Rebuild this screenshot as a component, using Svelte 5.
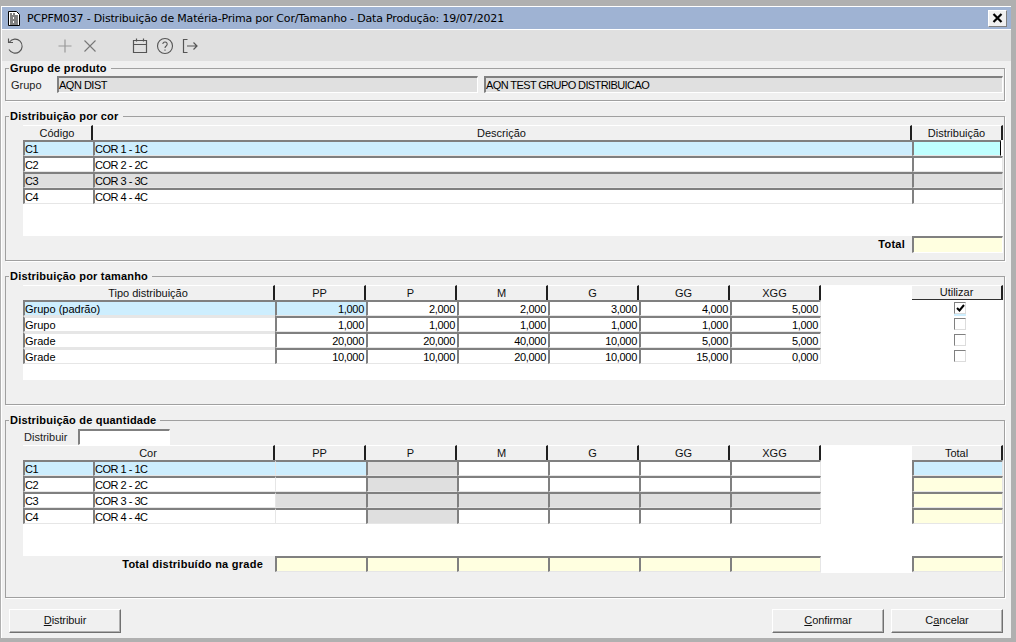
<script>
  const sizes = ['PP', 'P', 'M', 'G', 'GG', 'XGG'];
  const colors = [
    { code: 'C1', name: 'COR 1 - 1C' },
    { code: 'C2', name: 'COR 2 - 2C' },
    { code: 'C3', name: 'COR 3 - 3C' },
    { code: 'C4', name: 'COR 4 - 4C' }
  ];
  const types = [
    { name: 'Grupo (padrão)', values: ['1,000', '2,000', '2,000', '3,000', '4,000', '5,000'], on: true },
    { name: 'Grupo', values: ['1,000', '1,000', '1,000', '1,000', '1,000', '1,000'], on: false },
    { name: 'Grade', values: ['20,000', '20,000', '40,000', '10,000', '5,000', '5,000'], on: false },
    { name: 'Grade', values: ['10,000', '10,000', '20,000', '10,000', '15,000', '0,000'], on: false }
  ];
</script>

<div class="window">
  <div class="titlebar">
    <svg class="doc" width="14" height="15" viewBox="0 0 14 15">
      <path d="M1.500 .5h8l3 3v11h-11z" fill="#fff" stroke="#000" />
      <path d="M3 3h2M6 3h2M3 5h8M3 7h3M7 7h4M3 9h8M3 11h3M7 11h4M3 13h8" stroke="#000" />
    </svg>
    <span class="title">PCPFM037 - Distribuição de Matéria-Prima por Cor/Tamanho - Data Produção: 19/07/2021</span>
    <button class="close" aria-label="Fechar">
      <svg width="11" height="10" viewBox="0 0 11 10"><path d="M1.500 1 9.500 9M9.500 1 1.500 9" stroke="#000" stroke-width="2.2" /></svg>
    </button>
  </div>

  <div class="toolbar">
    <svg class="tool" width="20" height="20" viewBox="0 0 20 20" fill="none" stroke="#555" stroke-width="1.1">
      <path d="M4.500 6A7 7 0 1 1 4 13.500" /><path d="M3.500 2.500v4h4.500" />
    </svg>
    <svg class="tool add" width="20" height="20" viewBox="0 0 20 20" fill="none" stroke="#999" stroke-width="1.2">
      <path d="M10 3.500v13M3.500 10h13" />
    </svg>
    <svg class="tool" width="20" height="20" viewBox="0 0 20 20" fill="none" stroke="#777" stroke-width="1.1">
      <path d="M4.500 4.500l11 11M15.500 4.500l-11 11" />
    </svg>
    <svg class="tool cal" width="20" height="20" viewBox="0 0 20 20" fill="none" stroke="#555" stroke-width="1.2">
      <path d="M3.500 4.500h13v12h-13zM3.500 8.500h13M6.500 2.500v3M13.500 2.500v3" />
    </svg>
    <svg class="tool" width="20" height="20" viewBox="0 0 20 20" fill="none" stroke="#555" stroke-width="1.1">
      <circle cx="10" cy="10" r="7.500" /><path d="M7.800 8a2.200 2.200 0 1 1 3.400 2c-.8.500-1.200 1-1.200 2" /><path d="M10 13.500v1.200" />
    </svg>
    <svg class="tool" width="20" height="20" viewBox="0 0 20 20" fill="none" stroke="#555" stroke-width="1.2">
      <path d="M7.500 3.500h-4v13h4M7 10h10M13.500 6.500 17 10l-3.500 3.500" />
    </svg>
  </div>

  <div class="content">
    <section class="group g1">
      <h2>Grupo de produto</h2>
      <div class="product">
        <span class="label">Grupo</span>
        <div class="field readonly code caps">AQN DIST</div>
        <div class="field readonly desc caps">AQN TEST GRUPO DISTRIBUICAO</div>
      </div>
    </section>

    <section class="group g2">
      <h2>Distribuição por cor</h2>
      <div class="sheet">
        <div class="head colors">
          <div class="th">Código</div>
          <div class="th">Descrição</div>
          <div class="th">Distribuição</div>
        </div>
        {#each colors as c, i}
          <div class="row colors">
            <div class="td caps" class:blue={i === 0} class:grey={i === 2}>{c.code}</div>
            <div class="td caps" class:blue={i === 0} class:grey={i === 2}>{c.name}</div>
            <div class="td edge" class:cyan={i === 0} class:grey={i === 2}></div>
          </div>
        {/each}
        <div class="blank b32"></div>
      </div>
      <div class="total-line">
        <strong>Total</strong>
        <div class="field total-field"></div>
      </div>
    </section>

    <section class="group g3">
      <h2>Distribuição por tamanho</h2>
      <div class="sheet">
        <div class="head sizes">
          <div class="th">Tipo distribuição</div>
          {#each sizes as s}<div class="th">{s}</div>{/each}
          <div class="gap"></div>
          <div class="th underlined">Utilizar</div>
        </div>
        {#each types as t, i}
          <div class="row sizes">
            <div class="td" class:blue={i === 0} class:notop={i > 0}>{t.name}</div>
            {#each t.values as v, j}
              <div class="td num" class:blue={i === 0 && j === 0} class:edge={j === 5}>{v}</div>
            {/each}
            <div class="gap"></div>
            <div class="check-cell">
              <span class="check" class:current={i === 0}>
                {#if t.on}<svg width="9" height="8" viewBox="0 0 9 8"><path d="M1 4l2.500 2.500L8 1" fill="none" stroke="#000" stroke-width="2" /></svg>{/if}
              </span>
            </div>
          </div>
        {/each}
        <div class="blank b16"></div>
      </div>
    </section>

    <section class="group g4">
      <h2>Distribuição de quantidade</h2>
      <div class="distribute">
        <span class="label">Distribuir</span>
        <div class="field white-field"></div>
      </div>
      <div class="sheet">
        <div class="head sizes">
          <div class="th">Cor</div>
          {#each sizes as s}<div class="th">{s}</div>{/each}
          <div class="gap"></div>
          <div class="th">Total</div>
        </div>
        {#each colors as c, i}
          <div class="row sizes">
            <div class="pair">
              <div class="td caps" class:blue={i === 0}>{c.code}</div>
              <div class="td caps" class:blue={i === 0}>{c.name}</div>
            </div>
            {#each sizes as s, j}
              <div
                class="td"
                class:grey={j === 1 || i === 2}
                class:blue={i === 0 && j === 0}
                class:plain={j === 0}
                class:edge={j === 5}
              ></div>
            {/each}
            <div class="gap"></div>
            <div class="td edge" class:blue={i === 0} class:yellow={i > 0}></div>
          </div>
        {/each}
        <div class="blank b32"></div>
        <div class="row sizes">
          <div class="grand-label"><strong>Total distribuído na grade</strong></div>
          {#each sizes as s, j}<div class="td yellow" class:edge={j === 5}></div>{/each}
          <div class="gap"></div>
          <div class="td yellow edge"></div>
        </div>
      </div>
    </section>

    <div class="actions">
      <button class="btn"><u>D</u>istribuir</button>
      <span class="spacer"></span>
      <button class="btn"><u>C</u>onfirmar</button>
      <button class="btn">C<u>a</u>ncelar</button>
    </div>
  </div>
</div>

<style>
  :global(body) {
    margin: 0;
    background: #b0b0b0;
    font-family: "Liberation Sans", Arial, sans-serif;
    font-size: 11px;
    color: #000;
  }
  .window {
    width: 1010px;
    height: 632px;
    margin: 6px 0 0 1px;
    display: flex;
    flex-direction: column;
    box-sizing: border-box;
    border-top: 1px solid #fff;
    border-left: 1px solid #fff;
    background: #f0f0f0;
  }
  .titlebar {
    height: 23px;
    flex: none;
    box-sizing: border-box;
    display: flex;
    align-items: center;
    padding: 0 4px 0 5px;
    background: #9fb3d3;
    border-bottom: 1px solid #fff;
  }
  .doc { flex: none; }
  .title {
    margin-left: 6px;
    flex: 1;
    font-family: "DejaVu Sans", sans-serif;
    font-size: 11px;
    letter-spacing: -0.18px;
    white-space: nowrap;
  }
  .close {
    width: 19px;
    height: 17px;
    padding: 0;
    display: flex;
    align-items: center;
    justify-content: center;
    background: #f0f0f0;
    border: 1px solid;
    border-color: #fff #808080 #808080 #fff;
  }
  .toolbar {
    height: 31px;
    flex: none;
    box-sizing: border-box;
    display: flex;
    align-items: center;
    gap: 5px;
    padding: 0 0 0 3px;
    background: #e0e0e0;
  }
  .tool { flex: none; }
  .add { margin-left: 25px; }
  .cal { margin-left: 25px; }
  .content {
    flex: 1;
    min-height: 0;
    display: flex;
    flex-direction: column;
    padding: 0 6px 0 3px;
  }
  .group {
    box-sizing: border-box;
    position: relative;
    border: 1px solid #a0a0a0;
    box-shadow: 1px 1px 0 #fff;
    padding: 0 1px 0 17px;
  }
  h2 {
    position: absolute;
    top: -7px;
    left: 3px;
    margin: 0;
    padding: 0 4px 0 1px;
    height: 13px;
    line-height: 13px;
    font-size: 11px;
    font-weight: 700;
    background: #f0f0f0;
    letter-spacing: 0.2px;
  }
  .g1 { height: 33px; margin-top: 7px; padding-left: 5px; }
  .g2 { height: 145px; margin-top: 15px; padding-top: 8px; }
  .g3 { height: 129px; margin-top: 15px; padding-top: 8px; }
  .g4 { height: 178px; margin-top: 15px; padding-top: 8px; }

  .product {
    display: flex;
    align-items: center;
    margin-top: 7px;
  }
  .label { width: 46px; flex: none; color: #222; }
  .caps { letter-spacing: -0.5px; }
  .field {
    box-sizing: border-box;
    height: 17px;
    line-height: 15px;
    padding-left: 0;
    border-top: 2px solid #808080;
    border-left: 2px solid #808080;
    border-bottom: 1px solid #fff;
    border-right: 1px solid #fff;
    white-space: nowrap;
  }
  .readonly { background: #e0e0e0; }
  .code { width: 421px; }
  .desc { width: 519px; margin-left: 6px; letter-spacing: -0.6px; }

  .sheet { background: #fff; width: 980px; }
  .head { display: grid; height: 15px; }
  .row { display: grid; height: 16px; }
  .colors { grid-template-columns: 70px 819px 91px; }
  .sizes { grid-template-columns: 252px repeat(6, 91px) 91px 91px; }
  .th {
    box-sizing: border-box;
    height: 15px;
    line-height: 14px;
    text-align: center;
    background: #f0f0f0;
    border-top: 1px solid #fff;
    border-right: 2px solid #202020;
    color: #111;
    white-space: nowrap;
  }
  .th.underlined { border-bottom: 1px solid #303030; line-height: 13px; }
  .gap { background: #fff; }
  .td {
    box-sizing: border-box;
    height: 16px;
    line-height: 14px;
    padding: 0;
    background: #fff;
    border-top: 2px solid #808080;
    border-left: 2px solid #808080;
    border-bottom: 1px solid #e6e6e6;
    white-space: nowrap;
    overflow: hidden;
  }
  .td.num { text-align: right; letter-spacing: -0.3px; padding-right: 2px; }
  .td.blue { background: #cdeefe; }
  .td.grey { background: #dfdfdf; }
  .td.yellow, .total-field { background: #ffffe0; }
  .td.cyan { background: #bfffff; border-right: 1px solid #000; margin-right: 2px; }
  .td.edge { border-right: 1px solid #e6e6e6; }
  .td.cyan.edge { border-right-color: #000; }
  .td.notop { border-top-color: #e6e6e6; }
  .td.plain { border-left: 1px solid #e6e6e6; }
  .pair { display: grid; grid-template-columns: 70px 182px; }
  .blank { background: #fff; }
  .b16 { height: 16px; }
  .b32 { height: 32px; }
  .grand-label {
    background: #f0f0f0;
    text-align: right;
    padding-right: 12px;
    line-height: 17px;
    letter-spacing: 0.25px;
  }
  .total-line {
    width: 980px;
    display: flex;
    justify-content: flex-end;
    align-items: center;
    gap: 7px;
  }
  .total-line strong { letter-spacing: 0.25px; margin-bottom: 2px; }
  .total-field { width: 91px; }

  .check-cell {
    background: #fff;
    display: flex;
    justify-content: center;
    align-items: center;
    padding-left: 5px;
  }
  .check {
    box-sizing: border-box;
    width: 12px;
    height: 12px;
    display: flex;
    align-items: center;
    justify-content: center;
    border-top: 1px solid #808080;
    border-left: 1px solid #808080;
    border-bottom: 1px solid #dcdcdc;
    border-right: 1px solid #dcdcdc;
    background: #fff;
  }
  .check.current { box-shadow: 0 2px 0 #cdeefe; }
  .distribute { display: flex; align-items: center; height: 16px; margin-left: 1px; }
  .distribute .label { width: 54px; padding-bottom: 1px; }
  .white-field { width: 92px; height: 16px; background: #fff; }

  .actions {
    display: flex;
    gap: 7px;
    margin-top: 11px;
    padding: 0 2px 0 4px;
  }
  .spacer { flex: 1; }
  .btn {
    box-sizing: border-box;
    width: 112px;
    height: 24px;
    padding: 0 0 2px;
    font: inherit;
    letter-spacing: -0.1px;
    color: #111;
    background: #f0f0f0;
    border: 1px solid;
    border-color: #fff #707070 #707070 #fff;
    box-shadow: inset -1px -1px 0 #b0b0b0;
  }
</style>
